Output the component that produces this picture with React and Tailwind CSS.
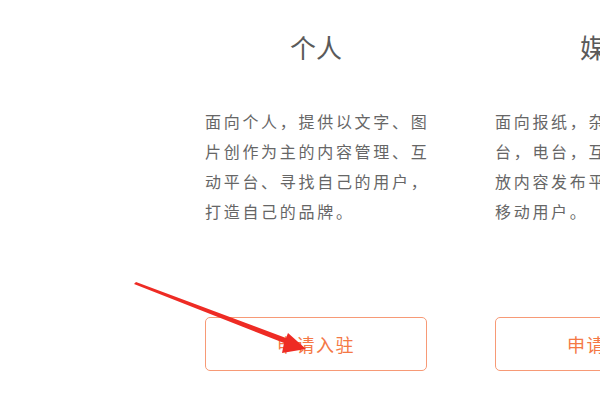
const CARDS = [
  {
    title: '个人',
    lines: ['面向个人，提供以文字、图', '片创作为主的内容管理、互', '动平台、寻找自己的用户，', '打造自己的品牌。'],
  },
  {
    title: '媒体',
    lines: ['面向报纸，杂志，电视，电', '台，电台，互联网媒体等，', '放内容发布平台，获取更多', '移动用户。'],
  },
];

function Card({ title, lines }) {
  return (
    <div className="w-[222px] shrink-0 flex flex-col">
      <div className="h-[97px] pt-[20px] text-center text-[26px] leading-[36px] text-[#5a5a5a]">{title}</div>
      <div className="h-[211px] text-[16px] leading-[30px] tracking-[2.7px] text-[#666] whitespace-nowrap">
        {lines.map((l, i) => (
          <div key={i}>{l}</div>
        ))}
      </div>
      <button className="h-[54px] w-[222px] rounded-[5px] border border-[#f79a76] text-[18px] tracking-[1.5px] text-[#f47845]">
        申请入驻
      </button>
    </div>
  );
}

export default function App() {
  return (
    <div
      className="relative w-[600px] h-[400px] overflow-hidden bg-white"
      style={{ fontFamily: '"Noto Sans CJK SC", "Noto Sans", sans-serif' }}
    >
      <div className="flex gap-[68px] pl-[205px] pt-[9px]">
        {CARDS.map((c) => (
          <Card key={c.title} {...c} />
        ))}
      </div>
      {/* annotation arrow */}
      <svg className="absolute left-0 top-0 pointer-events-none" width="600" height="400">
        <polygon points="134,284 136,282 286,338 288,333 306,349 282,353 284,343" fill="#ee2b24" />
      </svg>
    </div>
  );
}
